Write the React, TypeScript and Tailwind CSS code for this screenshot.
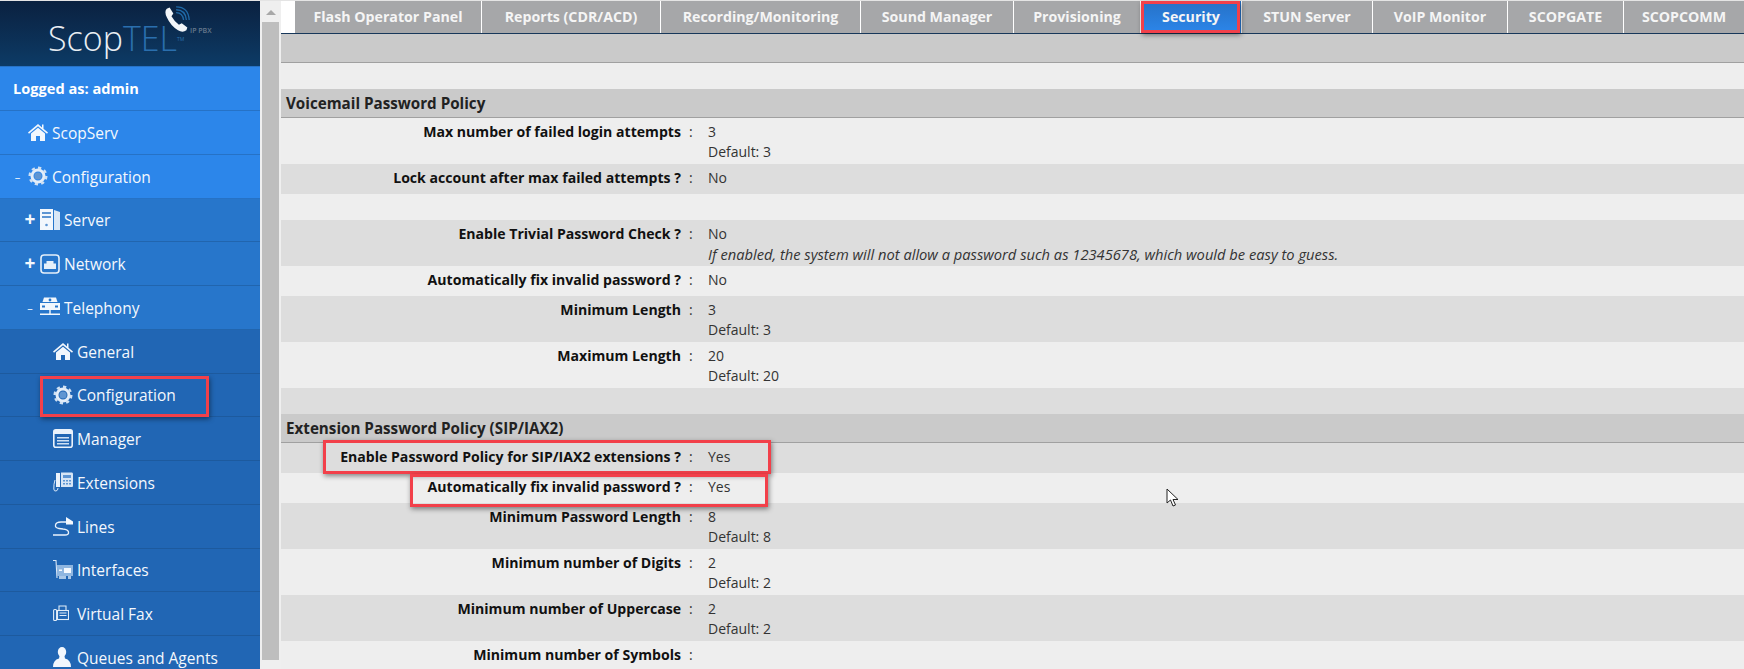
const font = "[font-family:'Open_Sans','Noto_Sans',sans-serif]";

/* ── Sidebar icons ─────────────────────────────────────── */
const HomeIcon = () => (
  <svg width="20" height="19" viewBox="0 0 20 19" fill="#f2f7fd">
    <path d="M10 1 L14 4.4 V1.5 H15.5 V5.7 L20 9.6 L19 10.8 L10 3.2 L1 10.8 L0 9.6 Z" />
    <path d="M3 10.6 L10 4.8 L17 10.6 V18 H12 V13 H8 V18 H3 Z" />
  </svg>
);

const GearIcon = () => (
  <svg width="20" height="20" viewBox="0 0 20 20">
    <circle cx="10" cy="10" r="6" fill="none" stroke="#e3edf9" strokeWidth="3" />
    <circle cx="10" cy="10" r="8.2" fill="none" stroke="#cfe0f3" strokeWidth="2.6" strokeDasharray="3.2 3.2" />
    <circle cx="10" cy="10" r="3.6" fill="#5f95d2" />
  </svg>
);

const ServerIcon = () => (
  <svg width="20" height="21" viewBox="0 0 20 21">
    <path d="M0 0 H13 V21 H0 Z" fill="#f2f7fd" />
    <path d="M14 1 L20 3 V21 H14 Z" fill="#d9e7f6" />
    <path d="M2 3 H11 V5 H2 Z M2 7 H11 V9 H2 Z" fill="#5d95d3" />
    <circle cx="6.5" cy="16" r="1.3" fill="#5d95d3" />
  </svg>
);

const NetworkIcon = () => (
  <svg width="20" height="20" viewBox="0 0 20 20">
    <rect x="1" y="1" width="18" height="18" rx="3" fill="#2776cb" stroke="#e6f0fa" strokeWidth="1.6" />
    <path d="M4 15 V9.5 H6.5 V7 H13.5 V9.5 H16 V15 Z" fill="#e6f0fa" />
  </svg>
);

const TelephonyIcon = () => (
  <svg width="20" height="20" viewBox="0 0 20 20" fill="#f2f7fd">
    <path d="M4 0.5 H16 L17.5 5 H2.5 Z" />
    <circle cx="10" cy="3" r="1.4" fill="#2776cb" />
    <path d="M0 6 H20 V13 H0 Z" />
    <path d="M2 8.5 H5 V10.5 H2 Z M15 8.5 H18 V10.5 H15 Z" fill="#2776cb" />
    <path d="M9.3 13 H10.7 V16.5 H20 V18 H0 V16.5 H9.3 Z" />
  </svg>
);

const ManagerIcon = () => (
  <svg width="20" height="19" viewBox="0 0 20 19">
    <rect x="0.8" y="0.8" width="18.4" height="17.4" rx="2" fill="#2166b4" stroke="#eaf2fb" strokeWidth="1.6" />
    <path d="M1 1 H19 V5 H1 Z" fill="#eaf2fb" />
    <path d="M4 8 H16 V9.4 H4 Z M4 11 H16 V12.4 H4 Z M4 14 H16 V15.4 H4 Z" fill="#cfe0f3" />
  </svg>
);

const ExtensionsIcon = () => (
  <svg width="20" height="20" viewBox="0 0 20 20">
    <path d="M3 1 H7 V15 H3 Z" fill="#eaf2fb" />
    <path d="M8 0.5 H19 Q20 0.5 20 2 V14 Q20 15 19 15 H8 Z" fill="#d6e5f5" />
    <path d="M10 3 H18 V6 H10 Z M10 8 H12 V9.5 H10 Z M13 8 H15 V9.5 H13 Z M16 8 H18 V9.5 H16 Z M10 11 H12 V12.5 H10 Z M13 11 H15 V12.5 H13 Z M16 11 H18 V12.5 H16 Z" fill="#5d95d3" />
    <path d="M2 8 Q0.6 12 0.8 17 Q1 19.4 3 19 Q5 18.6 5 16" fill="none" stroke="#dbe8f7" strokeWidth="1" />
  </svg>
);

const LinesIcon = () => (
  <svg width="20" height="20" viewBox="0 0 20 20" fill="none">
    <path d="M0 19 H12 Q16 19 15.500 16 Q15 13.500 10 13 L6 12.500 Q2 12 2.500 9 Q3 6 8 6 H14" stroke="#eaf2fb" strokeWidth="1.3" />
    <path d="M13 1 L20 5.500 V8.500 H13 Z" fill="#f5f9fe" />
  </svg>
);

const InterfacesIcon = () => (
  <svg width="20" height="20" viewBox="0 0 20 20">
    <path d="M0 0.5 H3 L4 18" fill="none" stroke="#dbe8f7" strokeWidth="1.1" />
    <path d="M4 5 H20 V16 H4 Z" fill="#8fb6e0" />
    <path d="M11 8 H18 V13 H11 Z" fill="#f5f9fe" />
    <path d="M6 9.5 H9 V11 H6 Z" fill="#f5f9fe" />
    <path d="M6 16 H13 V19 H6 Z M15 16 H18 V19 H15 Z" fill="#a9c7e7" />
  </svg>
);

const FaxIcon = () => (
  <svg width="16" height="17" viewBox="0 0 16 17" fill="none" stroke="#e2edf8" strokeWidth="1.1">
    <path d="M6 6 V1 H13 V6" />
    <rect x="4.5" y="5.5" width="11" height="9" />
    <path d="M6.5 8 H13.5 M6.5 10.5 H13.5" />
    <rect x="0.6" y="4.5" width="3" height="11" rx="1" />
  </svg>
);

const PersonIcon = () => (
  <svg width="18" height="20" viewBox="0 0 18 20" fill="#f2f7fd">
    <ellipse cx="9" cy="5" rx="4.2" ry="5" />
    <path d="M6.5 9 H11.5 L12 11.5 Q18 13 18 20 H0 Q0 13 6 11.5 Z" />
  </svg>
);

/* ── Logo ──────────────────────────────────────────────── */
function Logo() {
  return (
    <div className="h-[65px] shrink-0 relative bg-gradient-to-b from-[#0a2140] to-[#0c3b66] pl-[48px] pt-[14px]">
      <div className="text-[34px] leading-[46px] font-light whitespace-nowrap">
        <span className="text-[#e9eef3]">Scop</span>
        <span className="text-[#2a6fae]">TEL</span>
      </div>
      <span className="absolute left-[177px] top-[35px] text-[5px] leading-[6px] text-[#2a6fae]">TM</span>
      <span className="absolute left-[190px] top-[26px] text-[7px] leading-[8px] font-semibold text-[#66788c] whitespace-nowrap">IP PBX</span>
      <svg className="absolute left-[164px] top-[5px]" width="28" height="28" viewBox="0 0 30 30" fill="none">
        <path d="M3 3 Q0 6 3 12 Q7 21 15 26 Q20 29 24 26 L25 23 L19 18.5 L16 20 Q11 16.5 8 11 L10 8 L6 1.5 Z" fill="#f3f6f9" />
        <path d="M13 7 Q20 7 21 15" stroke="#1f6aa8" strokeWidth="1.4" />
        <path d="M13 4 Q23 4 24 15" stroke="#1f6aa8" strokeWidth="1.4" />
        <path d="M13 1 Q26 1 27 15" stroke="#1f6aa8" strokeWidth="1.4" />
      </svg>
    </div>
  );
}

/* ── Sidebar ───────────────────────────────────────────── */
const NAV = [
  { label: "ScopServ", icon: <HomeIcon />, level: 1, mark: "" },
  { label: "Configuration", icon: <GearIcon />, level: 1, mark: "–" },
  { label: "Server", icon: <ServerIcon />, level: 2, mark: "+" },
  { label: "Network", icon: <NetworkIcon />, level: 2, mark: "+" },
  { label: "Telephony", icon: <TelephonyIcon />, level: 2, mark: "–" },
  { label: "General", icon: <HomeIcon />, level: 3, mark: "" },
  { label: "Configuration", icon: <GearIcon />, level: 3, mark: "" },
  { label: "Manager", icon: <ManagerIcon />, level: 3, mark: "" },
  { label: "Extensions", icon: <ExtensionsIcon />, level: 3, mark: "" },
  { label: "Lines", icon: <LinesIcon />, level: 3, mark: "" },
  { label: "Interfaces", icon: <InterfacesIcon />, level: 3, mark: "" },
  { label: "Virtual Fax", icon: <FaxIcon />, level: 3, mark: "" },
  { label: "Queues and Agents", icon: <PersonIcon />, level: 3, mark: "" },
];

function NavRow({ label, icon, level, mark }: { label: string; icon: React.ReactNode; level: number; mark: string }) {
  const tone =
    level === 1 ? "bg-[#2c86ea] border-[#2672c6]" : level === 2 ? "bg-[#2776cb] border-[#2165ae]" : "bg-[#2166b4] border-[#1d5a9e]";
  const indent = level === 1 ? "pl-[7px]" : level === 2 ? "pl-[20px]" : "pl-[53px]";
  const markWidth = level === 1 ? "w-[21px]" : level === 2 ? "w-[20px]" : "w-0";
  const markFont = mark === "+" ? "text-[19px] font-bold" : "text-[11px] font-normal";
  return (
    <div className={`h-[43.75px] shrink-0 border-b flex items-center text-[15.5px] text-[#f4f8fd] ${tone} ${indent}`}>
      <span className={`${markWidth} ${markFont} shrink-0 text-center leading-none`}>{mark}</span>
      <span className="w-[24px] flex justify-start shrink-0">{icon}</span>
      <span className="pt-[2px]">{label}</span>
    </div>
  );
}

function Sidebar() {
  return (
    <aside className="w-[260px] shrink-0 flex flex-col overflow-hidden">
      <Logo />
      <div className="h-[45px] shrink-0 bg-[#2c86ea] border-t border-[#2672c6] border-b flex items-center pl-[13px] text-[14.6px] font-bold text-white">
        Logged as: admin
      </div>
      {NAV.map((n, i) => (
        <NavRow key={i} {...n} />
      ))}
    </aside>
  );
}

function Scrollbar() {
  return (
    <div className="w-[21px] shrink-0 bg-[#efefef] flex flex-col items-center">
      <svg className="mt-[9px] mb-[7px]" width="10" height="5" viewBox="0 0 10 5">
        <path d="M5 0 L10 5 H0 Z" fill="#a8a8a8" />
      </svg>
      <div className="w-[17px] h-[638px] bg-[#bebebe]" />
    </div>
  );
}

/* ── Tabs ──────────────────────────────────────────────── */
const TABS = [
  { label: "Flash Operator Panel", w: "w-[186px]" },
  { label: "Reports (CDR/ACD)", w: "w-[178px]" },
  { label: "Recording/Monitoring", w: "w-[199px]" },
  { label: "Sound Manager", w: "w-[152px]" },
  { label: "Provisioning", w: "w-[126px]" },
  { label: "Security", w: "w-[100px]", active: true },
  { label: "STUN Server", w: "w-[130px]" },
  { label: "VoIP Monitor", w: "w-[134px]" },
  { label: "SCOPGATE", w: "w-[115px]" },
  { label: "SCOPCOMM", w: "flex-1" },
];

function Tabs() {
  return (
    <div className="h-[33px] shrink-0 pl-[14px] flex gap-px border-b border-[#17375a] bg-white">
      {TABS.map((t) => (
        <div
          key={t.label}
          className={`${t.w} flex items-center justify-center text-[14.2px] font-bold text-[#f5f5f5] whitespace-nowrap ${
            t.active ? "bg-gradient-to-b from-[#2671c6] to-[#2c86ea]" : "bg-[#a6a7a9]"
          }`}
        >
          {t.label}
        </div>
      ))}
    </div>
  );
}

/* ── Policy table ──────────────────────────────────────── */
function Header({ children }: { children?: React.ReactNode }) {
  return (
    <div className="h-[29px] shrink-0 bg-[#cacaca] border-b border-[#a0a0a0] flex items-center pl-[5px] text-[15.2px] font-bold text-[#222]">
      {children}
    </div>
  );
}

function Row({
  label,
  value,
  note,
  italic,
  tone,
  tall,
}: {
  label?: string;
  value?: string;
  note?: string;
  italic?: string;
  tone: "light" | "dark";
  tall?: boolean;
}) {
  return (
    <div
      className={`shrink-0 flex pt-[4px] text-[14px] leading-[20px] text-[#333] ${tall ? "h-[46px]" : label ? "h-[30px]" : "h-[26px]"} ${
        tone === "light" ? "bg-[#eeeeee]" : "bg-[#dddddd]"
      }`}
    >
      <div className="w-[400px] shrink-0 text-right text-[14.1px] font-bold text-[#111]">{label}</div>
      {label && <div className="w-[27px] shrink-0 pl-[8px]">:</div>}
      <div>
        <div>{value}</div>
        {note && <div>{note}</div>}
        {italic && <div className="italic text-[14.7px]">{italic}</div>}
      </div>
    </div>
  );
}

function Main() {
  return (
    <main className="flex-1 min-w-0 flex flex-col overflow-hidden">
      <Tabs />
      <div className="h-[29px] shrink-0 bg-[#cacaca] border-b border-[#a0a0a0]" />
      <div className="h-[26px] shrink-0 bg-[#eeeeee]" />
      <Header>Voicemail Password Policy</Header>
      <Row tone="light" tall label="Max number of failed login attempts" value="3" note="Default: 3" />
      <Row tone="dark" label="Lock account after max failed attempts ?" value="No" />
      <Row tone="light" />
      <Row
        tone="dark"
        tall
        label="Enable Trivial Password Check ?"
        value="No"
        italic="If enabled, the system will not allow a password such as 12345678, which would be easy to guess."
      />
      <Row tone="light" label="Automatically fix invalid password ?" value="No" />
      <Row tone="dark" tall label="Minimum Length" value="3" note="Default: 3" />
      <Row tone="light" tall label="Maximum Length" value="20" note="Default: 20" />
      <Row tone="dark" />
      <Header>Extension Password Policy (SIP/IAX2)</Header>
      <Row tone="dark" label="Enable Password Policy for SIP/IAX2 extensions ?" value="Yes" />
      <Row tone="light" label="Automatically fix invalid password ?" value="Yes" />
      <Row tone="dark" tall label="Minimum Password Length" value="8" note="Default: 8" />
      <Row tone="light" tall label="Minimum number of Digits" value="2" note="Default: 2" />
      <Row tone="dark" tall label="Minimum number of Uppercase" value="2" note="Default: 2" />
      <Row tone="light" tall label="Minimum number of Symbols" />
    </main>
  );
}

/* ── Annotations drawn on top of the screenshot ────────── */
const boxClass = "absolute border-[3px] border-[#f2404a] shadow-[1px_2px_5px_rgba(0,0,0,0.45)] pointer-events-none";

export default function App() {
  return (
    <div className={`relative h-screen w-full overflow-hidden flex pt-px bg-[#e4e4e4] ${font}`}>
      <Sidebar />
      <Scrollbar />
      <Main />

      <div className={`${boxClass} left-[40px] top-[376px] w-[169px] h-[41px]`} />
      <div className={`${boxClass} left-[1141px] top-[1px] w-[99px] h-[32px]`} />
      <div className={`${boxClass} left-[323px] top-[440px] w-[448px] h-[34px]`} />
      <div className={`${boxClass} left-[410px] top-[474px] w-[358px] h-[33px]`} />

      {/* mouse pointer */}
      <svg className="absolute left-[1166px] top-[488px]" width="13" height="20" viewBox="0 0 13 20">
        <path d="M1 1 L1 15 L4.5 12 L7 18 L9.5 17 L7 11.5 L12 11.5 Z" fill="#fff" stroke="#222" strokeWidth="1" />
      </svg>
    </div>
  );
}
